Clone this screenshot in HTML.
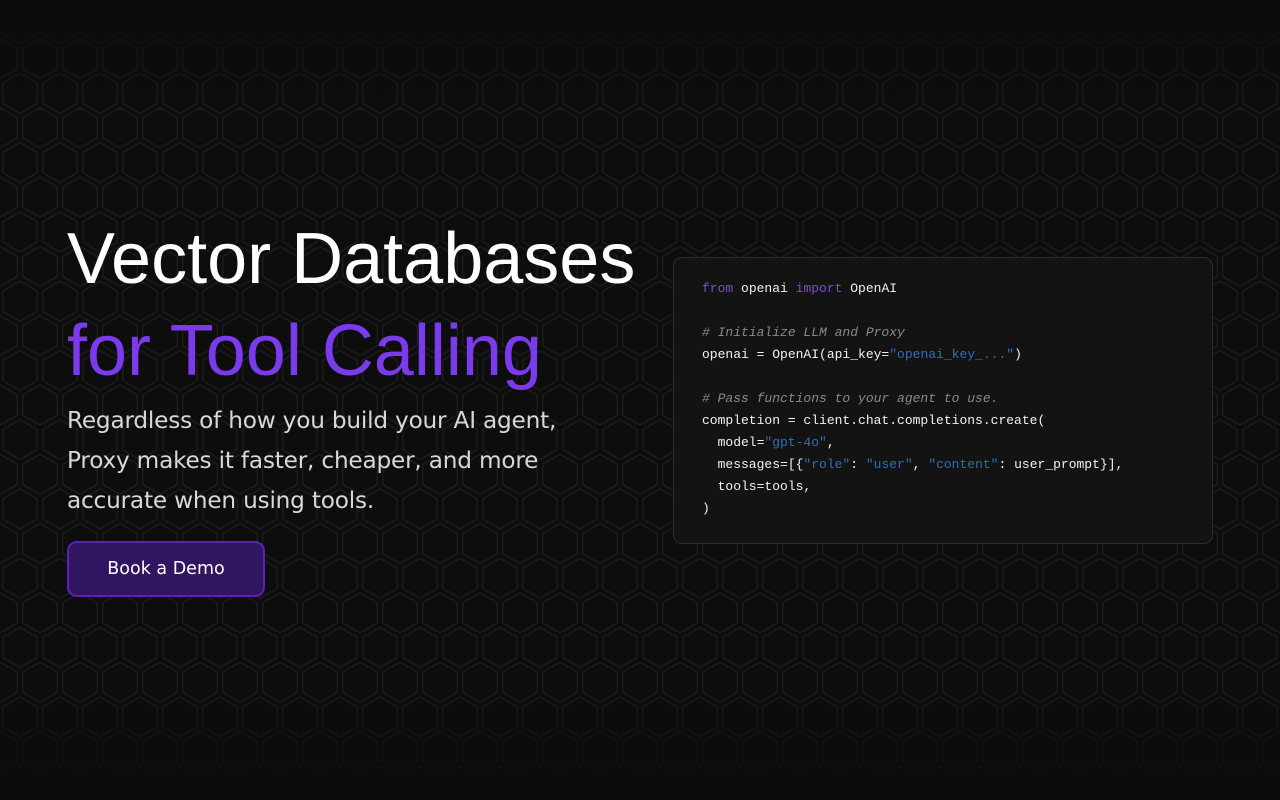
<!DOCTYPE html>
<html><head><meta charset="utf-8"><style>
*{margin:0;padding:0;box-sizing:border-box}
html,body{width:1280px;height:800px;overflow:hidden;background:#0d0d0d}
body{position:relative;font-family:"Liberation Sans",sans-serif}
#bg{position:absolute;inset:0}
#fade{position:absolute;inset:0;background:linear-gradient(to bottom,#0b0b0b 0px,rgba(11,11,11,0) 110px,rgba(11,11,11,0) 680px,#0b0b0b 800px)}
h1{position:absolute;left:67px;font-weight:400;font-size:72px;line-height:1;white-space:nowrap}
.l1{top:223px;color:#fff}
.l2{top:315px;color:#7c3aed}
p.sub{position:absolute;left:67px;top:401px;width:520px;line-height:40px;color:#d8d8d8;font-family:"DejaVu Sans","Liberation Sans",sans-serif;font-size:23.2px;letter-spacing:-0.2px}
.btn{position:absolute;left:67px;top:541px;width:198px;height:56px;border-radius:10px;background:rgba(52,22,103,0.92);border:2px solid #5b21b6;color:#fff;display:flex;align-items:center;justify-content:center;font-family:"DejaVu Sans","Liberation Sans",sans-serif;font-size:17.5px}
.code{position:absolute;left:673px;top:257px;width:540px;height:287px;background:#131313;border:1px solid #2c2c2c;border-radius:9px;padding:20px 0 0 28px;font-family:"Liberation Mono",monospace;font-size:13px;line-height:22px;color:#f2f2f2;white-space:pre}
.k{color:#7c4ddb}.c{color:#8a8a8a;font-style:italic}.s{color:#2f6fb8}
</style></head><body>
<svg id="bg" width="1280" height="800" xmlns="http://www.w3.org/2000/svg">
<defs><pattern id="hx" width="40" height="69.28" patternUnits="userSpaceOnUse" x="0" y="2">
<g fill="none" stroke="#1c1c1c" stroke-width="1.5">
<polygon points="20,2 37.3,12 37.3,32 20,42 2.7,32 2.7,12"/>
<polygon points="40,36.6 57.3,46.6 57.3,66.6 40,76.6 22.7,66.6 22.7,46.6"/>
<polygon points="0,36.6 17.3,46.6 17.3,66.6 0,76.6 -17.3,66.6 -17.3,46.6"/>
<polygon points="40,-32.6 57.3,-22.6 57.3,-2.6 40,7.4 22.7,-2.6 22.7,-22.6"/>
<polygon points="0,-32.6 17.3,-22.6 17.3,-2.6 0,7.4 -17.3,-2.6 -17.3,-22.6"/>
</g></pattern></defs>
<rect width="1280" height="800" fill="url(#hx)"/>
</svg>
<div id="fade"></div>
<h1 class="l1">Vector Databases</h1>
<h1 class="l2">for Tool Calling</h1>
<p class="sub">Regardless of how you build your AI agent,<br>Proxy makes it faster, cheaper, and more<br>accurate when using tools.</p>
<div class="btn">Book a Demo</div>
<div class="code"><span class="k">from</span> openai <span class="k">import</span> OpenAI

<span class="c"># Initialize LLM and Proxy</span>
openai = OpenAI(api_key=<span class="s">"openai_key_..."</span>)

<span class="c"># Pass functions to your agent to use.</span>
completion = client.chat.completions.create(
  model=<span class="s">"gpt-4o"</span>,
  messages=[{<span class="s">"role"</span>: <span class="s">"user"</span>, <span class="s">"content"</span>: user_prompt}],
  tools=tools,
)</div>
</body></html>
